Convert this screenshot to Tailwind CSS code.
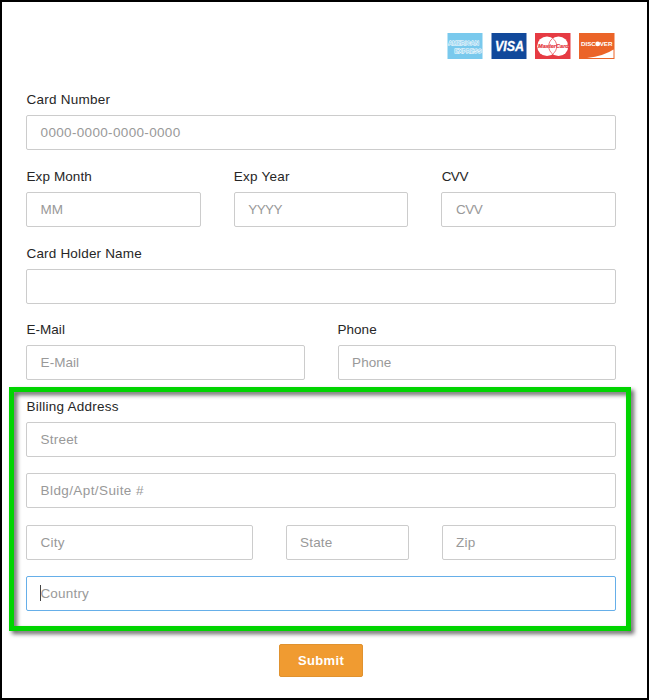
<!DOCTYPE html>
<html lang="en">
<head>
<meta charset="utf-8">
<title>Payment</title>
<script src="https://cdn.jsdelivr.net/npm/@tailwindcss/browser@4"></script>
</head>
<body class="bg-white font-['Liberation_Sans',Arial,sans-serif] text-[13.5px] text-[#262626]">
<main class="relative h-[700px] w-[649px] overflow-hidden border-2 border-black bg-white px-6">
  <div class="flex h-[88px] justify-end gap-2 pt-[31px] pr-2">
    <svg class="h-[26px] w-9" viewBox="0 0 36 26" font-family="Liberation Sans, Arial, sans-serif" font-weight="bold">
      <rect x=".5" width="35" height="26" fill="#79c9ed"/>
      <g fill="#8fd1f0" stroke="#fff" stroke-width=".9" paint-order="stroke" font-size="6.2">
        <text x="1.2" y="12.3" font-size="5.7">AMERICAN</text>
        <text x="7.6" y="19.6" font-size="5.7">EXPRESS</text>
      </g>
    </svg>
    <svg class="h-[26px] w-9" viewBox="0 0 36 26" font-family="Liberation Sans, Arial, sans-serif" font-weight="bold">
      <rect x=".5" width="35" height="26" fill="#11499b"/>
      <text x="4" y="18.3" fill="#fff" stroke="#fff" stroke-width=".3" font-size="14" font-style="italic" textLength="29" lengthAdjust="spacingAndGlyphs">VISA</text>
    </svg>
    <svg class="h-[26px] w-9" viewBox="0 0 36 26" font-family="Liberation Sans, Arial, sans-serif" font-weight="bold">
      <rect width="35.5" height="26" fill="#e63b43"/>
      <circle cx="12" cy="13.2" r="9.8" fill="#fff"/>
      <circle cx="23.5" cy="13.2" r="9.8" fill="#fff"/>
      <path d="M17.7 5.3a9.8 9.8 0 0 1 0 15.8a9.8 9.8 0 0 1 0-15.8z" fill="#fff" stroke="#e63b43" stroke-width=".7"/>
      <text x="3" y="15.4" fill="#e63b43" stroke="#e63b43" stroke-width=".2" font-size="5.6" font-style="italic">MasterCard</text>
    </svg>
    <svg class="h-[26px] w-9" viewBox="0 0 36 26" font-family="Liberation Sans, Arial, sans-serif" font-weight="bold">
      <rect width="35.5" height="26" fill="#eb6428"/>
      <path d="M8 25Q25 23 34.5 16.5V25z" fill="#fff"/>
      <g fill="#fff" font-size="6.2">
        <text x="2" y="13.1">DISC</text>
        <circle cx="18.7" cy="10.9" r="2.4"/>
        <text x="20.7" y="13.1">VER</text>
      </g>
    </svg>
  </div>

  <form class="w-[590px] tracking-[0.25px]">
    <div class="mb-[16.7px]">
      <div class="h-[25.3px] pl-[0.5px] leading-[19px]">Card Number</div>
      <div class="h-[35px] rounded-[2px] border border-[#ccc] px-[13.6px] leading-[33px] tracking-[0.33px] text-[#999]">0000-0000-0000-0000</div>
    </div>
    <div class="mb-[16.7px] grid grid-cols-3 gap-x-[33px]">
      <div>
        <div class="h-[25px] pl-[0.5px] leading-[19px] tracking-[0.1px]">Exp Month</div>
        <div class="h-[35px] rounded-[2px] border border-[#ccc] px-[13.6px] leading-[33px] tracking-normal text-[#999]">MM</div>
      </div>
      <div>
        <div class="h-[25px] leading-[19px]">Exp Year</div>
        <div class="h-[35px] rounded-[2px] border border-[#ccc] px-[13.6px] leading-[33px] tracking-[-0.6px] text-[#999]">YYYY</div>
      </div>
      <div>
        <div class="h-[25px] pl-[0.3px] leading-[19px] tracking-[-0.5px]">CVV</div>
        <div class="h-[35px] rounded-[2px] border border-[#ccc] px-[13.6px] leading-[33px] tracking-[-0.5px] text-[#999]">CVV</div>
      </div>
    </div>
    <div class="mb-[16.7px]">
      <div class="h-[25px] pl-[0.5px] leading-[19px] tracking-[0.18px]">Card Holder Name</div>
      <div class="h-[35px] rounded-[2px] border border-[#ccc]"></div>
    </div>
    <div class="mb-[16.7px] grid grid-cols-2 gap-x-[33px] tracking-[0.03px]">
      <div>
        <div class="h-[25px] pl-[0.5px] leading-[19px]">E-Mail</div>
        <div class="h-[35px] rounded-[2px] border border-[#ccc] px-[13.6px] leading-[33px] text-[#999]">E-Mail</div>
      </div>
      <div>
        <div class="h-[25px] leading-[19px]">Phone</div>
        <div class="h-[35px] rounded-[2px] border border-[#ccc] px-[13.6px] leading-[33px] text-[#999]">Phone</div>
      </div>
    </div>
    <div>
      <div class="h-[25px] pl-[0.5px] leading-[19px]">Billing Address</div>
      <div class="flex flex-col gap-[16.3px] leading-[33px] tracking-[0.2px] text-[#999]">
        <div class="h-[35px] rounded-[2px] border border-[#ccc] px-[13.6px]">Street</div>
        <div class="h-[35px] rounded-[2px] border border-[#ccc] px-[13.6px] tracking-[0.4px]">Bldg/Apt/Suite #</div>
        <div class="grid grid-cols-[227px_123px_174px] gap-x-[33px]">
          <div class="h-[35px] rounded-[2px] border border-[#ccc] px-[13.6px]">City</div>
          <div class="h-[35px] rounded-[2px] border border-[#ccc] px-[13px]">State</div>
          <div class="h-[35px] rounded-[2px] border border-[#ccc] px-[13px]">Zip</div>
        </div>
        <div class="flex h-[35px] items-center rounded-[2px] border border-[#66afe9] px-[13.4px]"><span class="-mr-px h-4 w-px bg-[#444]"></span>Country</div>
      </div>
    </div>
    <div class="flex justify-center pt-[33px]">
      <div class="h-[33px] w-[84px] rounded-[2px] border border-[#e0922f] bg-[#f09b31] text-center text-[13px] leading-[31px] font-bold tracking-[0.35px] text-white">Submit</div>
    </div>
  </form>

  <div class="pointer-events-none absolute top-[385px] left-[7px] h-[244px] w-[622px] border-5 border-[#00d400] [filter:drop-shadow(3px_3px_2px_rgba(0,0,0,0.6))]"></div>
</main>
</body>
</html>
